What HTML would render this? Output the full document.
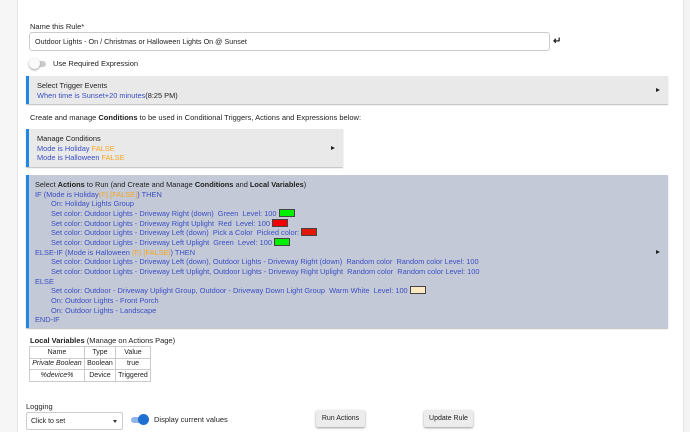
<!DOCTYPE html>
<html><head><meta charset="utf-8"><style>
*{margin:0;padding:0;box-sizing:border-box}
body{width:690px;height:432px;overflow:hidden;background:#fff;font-family:"Liberation Sans",sans-serif;color:#222;position:relative;font-size:7.4px}
.abs{position:absolute}
.lstrip{left:0;top:0;width:18px;height:432px;background:#f6f6f6;border-right:1px solid #e6e6e6}
.rstrip{left:683px;top:0;width:7px;height:432px;background:#f4f4f4;border-left:1px solid #e6e6e6}
.b{color:#3a4fc4}.o{color:#f5a623}
.box{background:#e9e9e9;border-left:3px solid #1e88e5;box-shadow:0 1px 1px #bbb}
.arrow{position:absolute;right:8px;width:0;height:0;border-left:4px solid #222;border-top:2.5px solid transparent;border-bottom:2.5px solid transparent}
.act{line-height:9.65px}
.sw{display:inline-block;width:16px;height:8px;border:1px solid #444;vertical-align:-1px}
table{border-collapse:collapse;border:1.5px solid #333}
td,th{border:1px solid #ccc;font-weight:normal;text-align:center;padding:0 2px;height:11.5px;font-size:7px}
.btn{background:#ececec;box-shadow:0 1px 2px #999;border-radius:2px;text-align:center;line-height:17px;font-size:7px}
</style></head><body>
<div class="abs lstrip"></div><div class="abs rstrip"></div>
<div class="abs" style="left:30px;top:22px;font-size:7.5px">Name this Rule*</div>
<div class="abs" style="left:29px;top:32px;width:521px;height:19px;border:1px solid #ccc;border-radius:3px;padding:4px 5px;font-size:7.2px">Outdoor Lights - On / Christmas or Halloween Lights On @ Sunset</div>
<div class="abs" style="left:553px;top:36px;font-size:10px;font-weight:bold">↵</div>
<div class="abs" style="left:30px;top:61px;width:16px;height:6px;border-radius:3px;background:#ccc"></div>
<div class="abs" style="left:29px;top:58px;width:11px;height:11px;border-radius:50%;background:#fafafa;box-shadow:0 1px 2px #999"></div>
<div class="abs" style="left:53px;top:59px;font-size:7.5px">Use Required Expression</div>
<div class="abs box" style="left:26px;top:76px;width:642px;height:28px;padding:5px 0 0 8px;line-height:9.7px">Select Trigger Events<br><span class="b">When time is Sunset+20 minutes</span>(8:25 PM)<div class="arrow" style="top:12px"></div></div>
<div class="abs" style="left:30px;top:113px;font-size:7.5px">Create and manage <b>Conditions</b> to be used in Conditional Triggers, Actions and Expressions below:</div>
<div class="abs box" style="left:26px;top:129px;width:317px;height:38px;padding:5px 0 0 8px;line-height:9.7px">Manage Conditions<br><span class="b">Mode is Holiday </span><span class="o">FALSE</span><br><span class="b">Mode is Halloween </span> <span class="o">FALSE</span><div class="arrow" style="top:17px"></div></div>
<div class="abs box act" style="left:26px;top:175px;width:642px;height:153px;background:#c4c9d7;padding:5px 0 0 6px">
Select <b>Actions</b> to Run (and Create and Manage <b>Conditions</b> and <b>Local Variables</b>)<br>
<span class="b">IF (Mode is Holiday<span class="o">(F) [FALSE]</span>) THEN</span><br>
<span class="b" style="padding-left:16px">On: Holiday Lights Group</span><br>
<span class="b" style="padding-left:16px">Set color: Outdoor Lights - Driveway Right (down)&nbsp; Green&nbsp; Level: 100 </span><span class="sw" style="background:#00f000"></span><br>
<span class="b" style="padding-left:16px">Set color: Outdoor Lights - Driveway Right Uplight&nbsp; Red&nbsp; Level: 100 </span><span class="sw" style="background:#f00000"></span><br>
<span class="b" style="padding-left:16px">Set color: Outdoor Lights - Driveway Left (down)&nbsp; Pick a Color&nbsp; Picked color: </span><span class="sw" style="background:#e01a00"></span><br>
<span class="b" style="padding-left:16px">Set color: Outdoor Lights - Driveway Left Uplight&nbsp; Green&nbsp; Level: 100 </span><span class="sw" style="background:#00f000"></span><br>
<span class="b">ELSE-IF (Mode is Halloween <span class="o">(F) [FALSE]</span>) THEN</span><br>
<span class="b" style="padding-left:16px">Set color: Outdoor Lights - Driveway Left (down), Outdoor Lights - Driveway Right (down)&nbsp; Random color&nbsp; Random color Level: 100</span><br>
<span class="b" style="padding-left:16px">Set color: Outdoor Lights - Driveway Left Uplight, Outdoor Lights - Driveway Right Uplight&nbsp; Random color&nbsp; Random color Level: 100</span><br>
<span class="b">ELSE</span><br>
<span class="b" style="padding-left:16px">Set color: Outdoor - Driveway Uplight Group, Outdoor - Driveway Down Light Group&nbsp; Warm White&nbsp; Level: 100 </span><span class="sw" style="background:#fde8c4"></span><br>
<span class="b" style="padding-left:16px">On: Outdoor Lights - Front Porch</span><br>
<span class="b" style="padding-left:16px">On: Outdoor Lights - Landscape</span><br>
<span class="b">END-IF</span>
<div class="arrow" style="top:75px"></div></div>
<div class="abs" style="left:30px;top:336px;font-size:7.5px"><b>Local Variables</b> (Manage on Actions Page)</div>
<table class="abs" style="left:29px;top:346px;width:122px">
<tr><th>Name</th><th>Type</th><th>Value</th></tr>
<tr><td><i>Private Boolean</i></td><td>Boolean</td><td>true</td></tr>
<tr><td><i>%device%</i></td><td>Device</td><td>Triggered</td></tr>
</table>
<div class="abs" style="left:26px;top:402px;font-size:7.5px">Logging</div>
<div class="abs" style="left:26px;top:412px;width:97px;height:18px;border:1px solid #ccc;border-radius:2px;padding:5px 4px;font-size:7px">Click to set<span style="position:absolute;right:5px;top:7px;border-top:3px solid #333;border-left:2.5px solid transparent;border-right:2.5px solid transparent"></span></div>
<div class="abs" style="left:131px;top:417px;width:16px;height:6px;border-radius:3px;background:#8fb6e6"></div>
<div class="abs" style="left:138px;top:414px;width:11px;height:11px;border-radius:50%;background:#1e6fd0"></div>
<div class="abs" style="left:154px;top:415px;font-size:7.5px">Display current values</div>
<div class="abs btn" style="left:316px;top:410px;width:49px;height:17px">Run Actions</div>
<div class="abs btn" style="left:424px;top:410px;width:49px;height:17px">Update Rule</div>
</body></html>
